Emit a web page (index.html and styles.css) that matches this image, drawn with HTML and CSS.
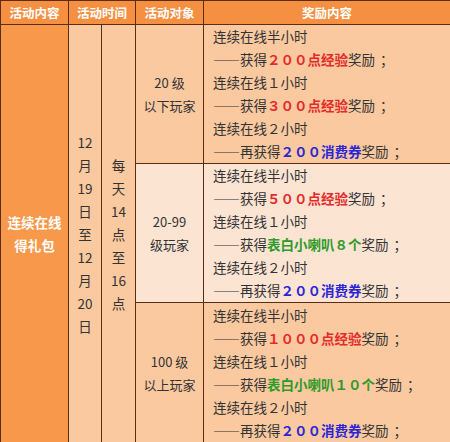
FILE: index.html
```html
<!DOCTYPE html>
<html lang="zh">
<head>
<meta charset="utf-8">
<link rel="stylesheet" href="styles.css">
</head>
<body>
<table class="tbl">
  <colgroup>
    <col class="c1"><col class="c2"><col class="c3"><col class="c4"><col class="c5">
  </colgroup>
  <tr class="head">
    <th>活动内容</th>
    <th colspan="2">活动时间</th>
    <th>活动对象</th>
    <th>奖励内容</th>
  </tr>
  <tr class="r1">
    <td rowspan="3" class="name">连续在线<br>得礼包</td>
    <td rowspan="3" class="vert">12<br>月<br>19<br>日<br>至<br>12<br>月<br>20<br>日</td>
    <td rowspan="3" class="vert">每<br>天<br>14<br>点<br>至<br>16<br>点</td>
    <td class="who">20 级<br>以下玩家</td>
    <td class="rw">
      <div>连续在线半小时</div>
      <div>——获得<b class="red">２００点经验</b>奖励<span class="semi">；</span></div>
      <div>连续在线１小时</div>
      <div>——获得<b class="red">３００点经验</b>奖励<span class="semi">；</span></div>
      <div>连续在线２小时</div>
      <div>——再获得<b class="blue">２００消费券</b>奖励<span class="semi">；</span></div>
    </td>
  </tr>
  <tr class="r2">
    <td class="who light">20-99<br>级玩家</td>
    <td class="rw light">
      <div>连续在线半小时</div>
      <div>——获得<b class="red">５００点经验</b>奖励<span class="semi">；</span></div>
      <div>连续在线１小时</div>
      <div>——获得<b class="green">表白小喇叭８个</b>奖励<span class="semi">；</span></div>
      <div>连续在线２小时</div>
      <div>——再获得<b class="blue">２００消费券</b>奖励<span class="semi">；</span></div>
    </td>
  </tr>
  <tr class="r3">
    <td class="who">100 级<br>以上玩家</td>
    <td class="rw">
      <div>连续在线半小时</div>
      <div>——获得<b class="red">１０００点经验</b>奖励<span class="semi">；</span></div>
      <div>连续在线１小时</div>
      <div>——获得<b class="green">表白小喇叭１０个</b>奖励<span class="semi">；</span></div>
      <div>连续在线２小时</div>
      <div>——再获得<b class="blue">２００消费券</b>奖励<span class="semi">；</span></div>
    </td>
  </tr>
</table>
</body>
</html>
```
FILE: styles.css
```css
html, body {
  margin: 0;
  padding: 0;
  background: #ffffff;
}
body {
  font-family: "Noto Sans CJK SC", "Noto Sans", sans-serif;
  color: #333333;
}
.tbl {
  border-collapse: collapse;
  table-layout: fixed;
  width: 450px;
  font-size: 13.5px;
}
.c1 { width: 68px; }
.c2 { width: 33px; }
.c3 { width: 34px; }
.c4 { width: 68px; }
.c5 { width: 247px; }
.tbl th, .tbl td {
  border: 1px solid #5b2d12;
  padding: 0;
  background: #fac9a0;
}
.head th {
  height: 23px;
  background: #f58f42;
  color: #ffffff;
  font-size: 12.5px;
  font-weight: bold;
  text-align: center;
}
.r1 td { height: 136px; }
.r2 td { height: 137px; }
.r3 td { height: 140px; }
.tbl td.name {
  background: #f7984a;
  color: #ffffff;
  font-weight: bold;
  text-align: center;
  line-height: 23px;
}
.vert {
  text-align: center;
  line-height: 23px;
}
.who {
  text-align: center;
  line-height: 23px;
  font-size: 13px;
}
.rw {
  padding-left: 9px !important;
  line-height: 23px;
  white-space: nowrap;
}
.semi {
  padding-left: 5px;
}
.tbl td.light {
  background: #fce4d3;
}
.red { color: #e42b2b; }
.green { color: #2f9a2a; }
.blue { color: #2a25d6; }
```
